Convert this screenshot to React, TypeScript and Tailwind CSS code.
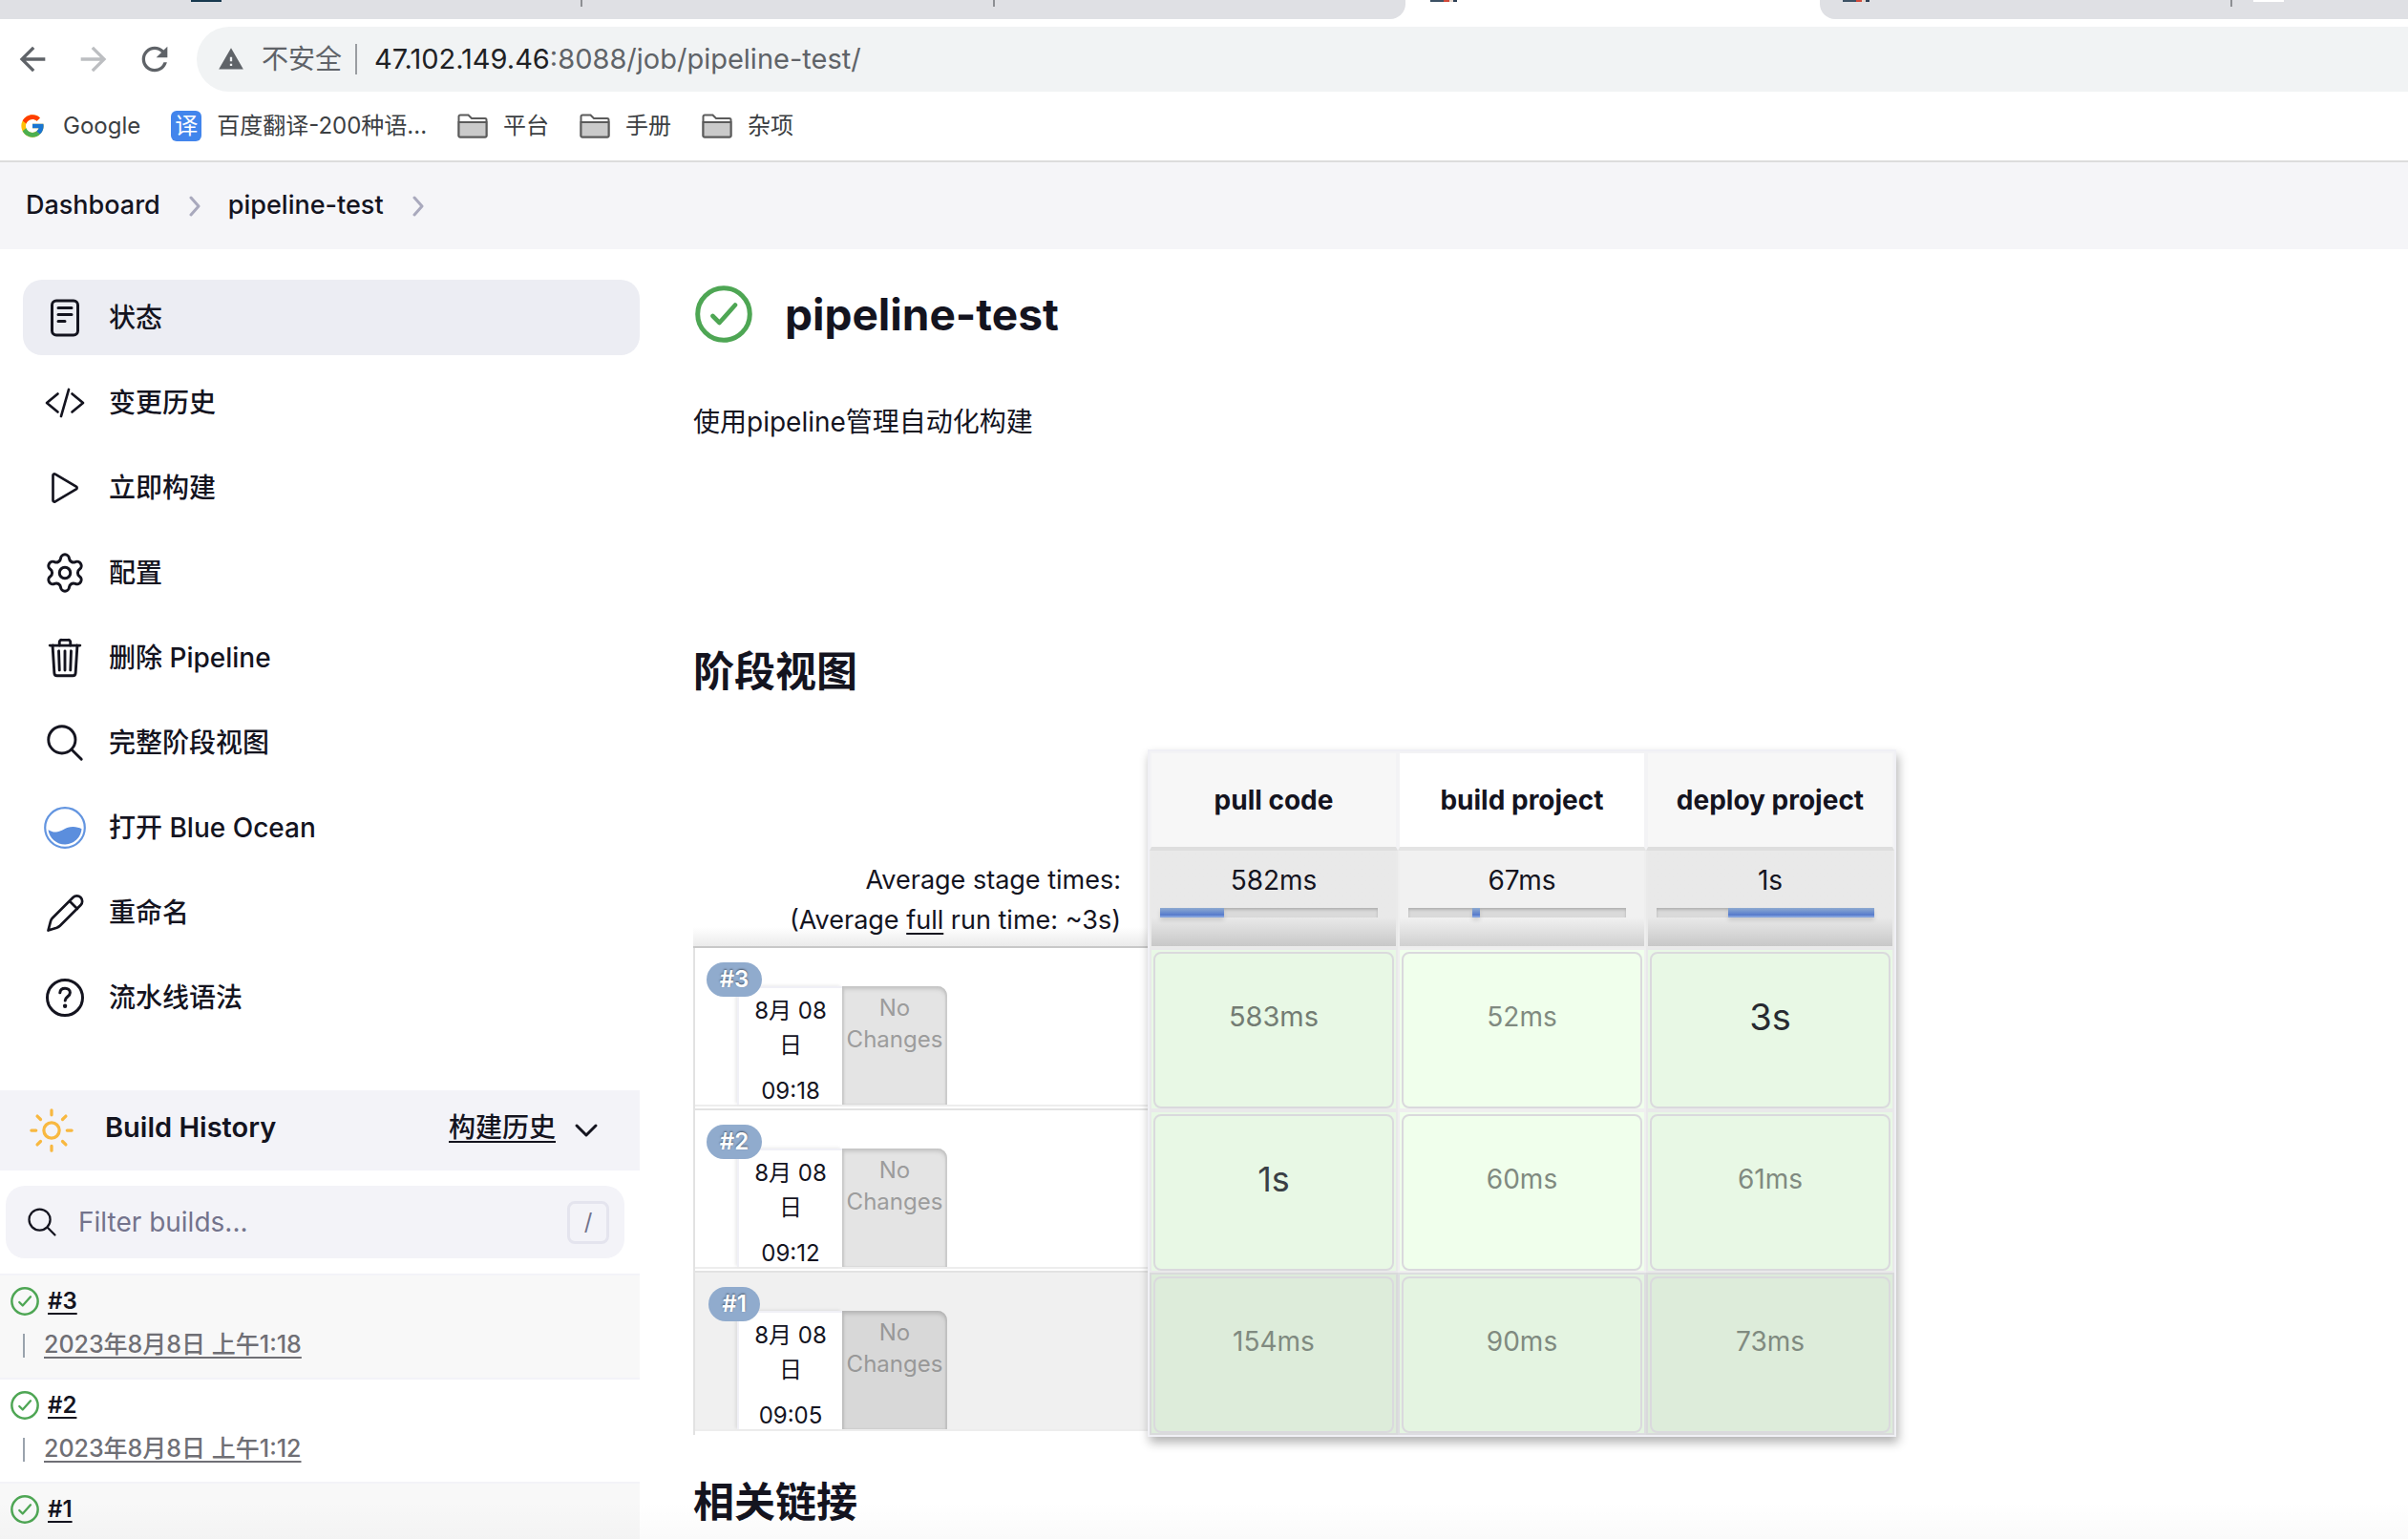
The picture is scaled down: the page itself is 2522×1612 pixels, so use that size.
import React from "react";
import { ChevronDown, Settings } from "lucide-react";
import { IoSearchOutline, IoSunnyOutline, IoTrashOutline } from "react-icons/io5";
import { MdArrowBack, MdArrowForward, MdRefresh, MdWarning } from "react-icons/md";
import { FcGoogle } from "react-icons/fc";

type IconProps = { children: React.ReactNode };

function LineIcon({ children }: IconProps) {
  return (
    <svg
      viewBox="0 0 48 48"
      className="size-12"
      fill="none"
      stroke="currentColor"
      strokeWidth="3"
      strokeLinecap="round"
      strokeLinejoin="round"
      aria-hidden="true"
    >
      {children}
    </svg>
  );
}

function StatusCheck({ className }: { className: string }) {
  return (
    <svg viewBox="0 0 60 60" className={className} fill="none" stroke="#4ea654" strokeWidth="5" strokeLinecap="round" strokeLinejoin="round" aria-hidden="true">
      <circle cx="30" cy="30" r="27.3" />
      <path d="M18.5 32l7 7L42 20.500" strokeWidth="4.600" />
    </svg>
  );
}

function FolderIcon() {
  return (
    <svg viewBox="0 0 32 26" className="h-[26px] w-8" aria-hidden="true">
      <path d="M1.500 3a1.500 1.500 0 0 1 1.500-1.500h8.500l3.500 3.500h14a1.500 1.500 0 0 1 1.500 1.500v16.500a1.500 1.500 0 0 1-1.500 1.500h-26a1.500 1.500 0 0 1-1.500-1.500z" fill="#fff" stroke="#5b5b5b" strokeWidth="2" />
      <path d="M1.500 9h29v14a1.500 1.500 0 0 1-1.500 1.500h-26a1.500 1.500 0 0 1-1.500-1.500z" fill="#cacaca" stroke="#5b5b5b" strokeWidth="2" />
    </svg>
  );
}

function TabFavicon() {
  return (
    <span className="flex h-0.5 w-7">
      <span className="w-3.5 bg-[#3d5265]" />
      <span className="w-1.5 bg-[#d2493a]" />
      <span className="w-1 bg-[#e8d9d0]" />
      <span className="w-1 bg-[#2d3f55]" />
    </span>
  );
}

function BrowserChrome() {
  return (
    <header className="shrink-0 border-b-2 border-[#dcdcdc] bg-white">
      <div className="flex h-5 items-start">
        <div className="flex h-5 w-[1472px] items-start rounded-br-2xl bg-[#dfe0e4]">
          <span className="ml-[200px] h-0.5 w-8 bg-[#17394f]" />
          <span className="ml-[376px] h-[7px] w-0.5 bg-[#8d8f93]" />
          <span className="ml-[430px] h-[7px] w-0.5 bg-[#8d8f93]" />
        </div>
        <div className="w-[434px] pl-[26px]">
          <TabFavicon />
        </div>
        <div className="flex h-5 flex-1 items-start rounded-bl-2xl bg-[#dfe0e4] pl-6">
          <TabFavicon />
          <span className="ml-[378px] h-[7px] w-0.5 bg-[#8d8f93]" />
          <span className="ml-[22px] h-0.5 w-8 bg-white" />
        </div>
      </div>
      <div className="flex items-center pt-2 pl-3.5 text-[#5f6368]">
        <button type="button" aria-label="Back">
          <MdArrowBack size={40} />
        </button>
        <button type="button" aria-label="Forward" className="ml-6 text-[#bcbec1]">
          <MdArrowForward size={40} />
        </button>
        <button type="button" aria-label="Reload" className="ml-6">
          <MdRefresh size={40} />
        </button>
        <div className="ml-6 flex h-[68px] flex-1 items-center rounded-l-full bg-[#f1f3f4] pl-[22px] text-[28px]">
          <MdWarning size={28} />
          <span className="ml-[18px]">不安全</span>
          <span className="ml-3.5 h-8 w-0.5 bg-[#9a9da1]" />
          <div role="textbox" aria-label="Address" className="ml-[18px] text-[29px]">
            <span className="text-[#202124]">47.102.149.46</span>:8088/job/pipeline-test/
          </div>
        </div>
      </div>
      <nav aria-label="Bookmarks" className="flex h-[72px] items-center gap-8 pl-5 text-[24px] text-[#3c4043]">
        <a href="#google" className="flex items-center gap-[18px]">
          <FcGoogle size={28} />
          Google
        </a>
        <a href="#fanyi" className="flex items-center gap-4">
          <span className="flex size-8 items-center justify-center rounded-md bg-[#4285ec] text-[24px] text-white">译</span>
          百度翻译-200种语...
        </a>
        {["平台", "手册", "杂项"].map((name) => (
          <button type="button" key={name} className="flex items-center gap-4">
            <FolderIcon />
            {name}
          </button>
        ))}
      </nav>
    </header>
  );
}

function Crumb({ label }: { label: string }) {
  return (
    <li className="flex items-center gap-[30px]">
      <a href="#crumb">{label}</a>
      <svg viewBox="0 0 12 22" className="h-[22px] w-3" fill="none" stroke="#a9a9bd" strokeWidth="3" strokeLinecap="round" strokeLinejoin="round" aria-hidden="true">
        <path d="M2 2l8 9-8 9" />
      </svg>
    </li>
  );
}

const tasks: { label: string; icon: React.ReactNode }[] = [
  {
    label: "状态",
    icon: (
      <LineIcon>
        <rect x="10.5" y="6" width="27" height="36" rx="4.5" />
        <path d="M17 13.500h14M17 20.500h14M17 27.500h7" />
      </LineIcon>
    ),
  },
  {
    label: "变更历史",
    icon: (
      <LineIcon>
        <path d="M16.500 14.500L5 24l11.500 9.500M31.500 14.500L43 24l-11.500 9.500M28 10l-8 28" strokeWidth="2.700" />
      </LineIcon>
    ),
  },
  {
    label: "立即构建",
    icon: (
      <LineIcon>
        <path d="M11.500 11v26c0 1.300 1.200 2.100 2.300 1.400l22-13c1.100-.7 1.100-2.100 0-2.800l-22-13c-1.100-.7-2.300.1-2.300 1.400z" strokeWidth="2.700" />
      </LineIcon>
    ),
  },
  { label: "配置", icon: <Settings size={46} strokeWidth={3} absoluteStrokeWidth /> },
  { label: "删除 Pipeline", icon: <IoTrashOutline size={46} /> },
  { label: "完整阶段视图", icon: <IoSearchOutline size={46} /> },
  {
    label: "打开 Blue Ocean",
    icon: (
      <LineIcon>
        <circle cx="24" cy="24" r="20.8" stroke="#6395e0" strokeWidth="2.200" />
        <path d="M6.500 26.200c2.500 1.200 5 2.600 8.500 2.300 7-.7 9-5.500 17.500-5.500 3.500 0 6.500 1 9 2.200A17.600 17.600 0 0 1 6.500 26.200z" fill="#5b8edd" stroke="none" />
      </LineIcon>
    ),
  },
  {
    label: "重命名",
    icon: (
      <LineIcon>
        <path d="M6.500 42.500L9 33q.5-2 2-3.500L32.500 8a5.600 5.600 0 0 1 8 8L19 37.500q-1.500 1.500-3.500 2.200zM29 12l8 8" strokeWidth="2.700" />
      </LineIcon>
    ),
  },
  {
    label: "流水线语法",
    icon: (
      <LineIcon>
        <circle cx="24" cy="24" r="18.500" />
        <path d="M18.800 18.800c.3-3 2.500-4.600 5.300-4.600 3 0 5.300 1.900 5.300 4.600 0 4.200-5.200 4.200-5.200 8.200" />
        <circle cx="24.100" cy="32.800" r="2.200" fill="currentColor" stroke="none" />
      </LineIcon>
    ),
  },
];

const builds: { id: string; time?: string }[] = [
  { id: "#3", time: "2023年8月8日 上午1:18" },
  { id: "#2", time: "2023年8月8日 上午1:12" },
  { id: "#1" },
];

function Sidebar() {
  return (
    <aside className="w-[670px] shrink-0 pt-8">
      <nav aria-label="Tasks" className="flex flex-col gap-2.5 pl-6">
        {tasks.map((task, i) => (
          <a
            key={task.label}
            href="#task"
            className={
              i === 0
                ? "flex h-[79px] items-center gap-[22px] rounded-[20px] bg-[#ecedf3] pl-5 text-[28px] font-medium"
                : "flex h-[79px] items-center gap-[22px] rounded-[20px] pl-5 text-[28px] font-medium"
            }
          >
            <span className="flex size-12 items-center justify-center">{task.icon}</span>
            {task.label}
          </a>
        ))}
      </nav>

      <section className="mt-[58px]">
        <div className="flex h-[84px] items-center bg-[#f3f3f8] pr-9 pl-7 text-[28px]">
          <IoSunnyOutline size={52} color="#f8b840" />
          <h2 className="ml-[30px] flex-1 pb-1.5 text-[29px] font-semibold">Build History</h2>
          <a href="#trend" className="pb-1.5 font-medium underline decoration-2 underline-offset-4">
            构建历史
          </a>
          <button type="button" aria-label="Collapse" className="ml-3">
            <ChevronDown size={40} strokeWidth={3} absoluteStrokeWidth />
          </button>
        </div>
        <label className="mt-4 mr-4 ml-1.5 flex h-[76px] items-center rounded-[20px] bg-[#f3f3f8] pr-4 pl-5">
          <IoSearchOutline size={36} />
          <input
            type="text"
            aria-label="Filter builds"
            placeholder="Filter builds..."
            className="ml-5 min-w-0 flex-1 bg-transparent text-[28px] outline-none placeholder:text-[#73738c]"
          />
          <kbd className="flex h-[45px] w-11 items-center justify-center rounded-lg border-3 border-[#e4e4ee] font-[Inter] text-[24px] text-[#73738c]">/</kbd>
        </label>
        <ul className="mt-4">
          {builds.map((b) => (
            <li key={b.id} className="h-[109px] border-t-2 border-[#f3f3f8] pt-2.5 odd:bg-[#f8f8f8]">
              <div className="flex h-[34px] items-center gap-[9px] pl-[11px]">
                <StatusCheck className="size-[30px]" />
                <a href="#build" className="text-[24px] font-semibold underline decoration-2 underline-offset-4">
                  {b.id}
                </a>
              </div>
              {b.time && (
                <div className="mt-3 flex h-[34px] items-center gap-5 pl-6">
                  <span className="h-[25px] w-0.5 bg-[#9aa3ad]" />
                  <a href="#build" className="text-[25px] font-medium text-[#6f6f75] underline decoration-2 underline-offset-4">
                    {b.time}
                  </a>
                </div>
              )}
            </li>
          ))}
        </ul>
      </section>
    </aside>
  );
}

const stages = [
  { name: "pull code", average: "582ms", start: 0, share: 29.5 },
  { name: "build project", average: "67ms", start: 29.5, share: 3.5 },
  { name: "deploy project", average: "1s", start: 33, share: 67 },
];

const small = "text-[28px] text-[#808a80]";
const runs = [
  {
    id: "#3",
    time: "09:18",
    first: false,
    cells: [
      { t: "583ms", c: "text-[29px] text-[#737c73]" },
      { t: "52ms", c: small },
      { t: "3s", c: "text-[38px] text-[#272a30]" },
    ],
  },
  {
    id: "#2",
    time: "09:12",
    first: false,
    cells: [
      { t: "1s", c: "text-[36px] text-[#3a3f45]" },
      { t: "60ms", c: small },
      { t: "61ms", c: small },
    ],
  },
  {
    id: "#1",
    time: "09:05",
    first: true,
    cells: [
      { t: "154ms", c: small },
      { t: "90ms", c: small },
      { t: "73ms", c: small },
    ],
  },
];

function cellTone(first: boolean, column: number) {
  if (first) return column === 1 ? "border-[#dddde0] bg-[#e4f4e1]" : "border-[#d9dadb] bg-[#ddecda]";
  return column === 1 ? "border-[#efefef] bg-[#f0ffec]" : "border-[#e9e9ea] bg-[#e8f8e5]";
}

function StageView() {
  return (
    <div className="relative mt-[54px] w-fit">
      <table className="table-fixed border-separate border-spacing-0">
        <colgroup>
          <col className="w-[478px]" />
          <col className="w-[260px]" />
          <col className="w-[260px]" />
          <col className="w-[260px]" />
        </colgroup>
        <thead>
          <tr>
            <td className="h-[104px] p-0" />
            {stages.map((s, i) => (
              <th
                key={s.name}
                scope="col"
                className={
                  i === 1
                    ? "h-[104px] border-2 border-b-4 border-[#f3f3f5] border-b-[#e4e4e4] bg-white p-0 text-[28px] font-bold"
                    : "h-[104px] border-2 border-b-4 border-[#f3f3f5] border-b-[#dedede] bg-[#f7f7f7] p-0 text-[28px] font-bold"
                }
              >
                {s.name}
              </th>
            ))}
          </tr>
          <tr>
            <td className="h-[102px] border-b-2 border-[#c8c8c8] bg-linear-to-t from-[#ebebeb] to-white to-20% p-0 pt-2.5 pr-[30px] text-right align-top text-[27px] leading-[42px]">
              Average stage times:
              <br />
              (Average <span className="underline decoration-2 underline-offset-4">full</span> run time: ~3s)
            </td>
            {stages.map((s, i) => (
              <td
                key={s.name}
                className={
                  i === 1
                    ? "h-[102px] border-x-2 border-b-2 border-[#eeeeee] bg-linear-to-t from-[#d0d0d0] to-[#f1f1f1] to-30% p-0 text-center align-top text-[28px]"
                    : "h-[102px] border-x-2 border-b-2 border-[#eaeaea] bg-linear-to-t from-[#c8c8c8] to-[#e9e9e9] to-30% p-0 text-center align-top text-[28px]"
                }
              >
                <div className="pt-2.5 leading-[42px]">{s.average}</div>
                <div className="mt-2 mr-[19px] ml-[9px] flex h-2.5 bg-[#dadada] shadow-[inset_0_2px_3px_#b0b0b0]">
                  <span
                    className="h-2.5 border-b-2 border-[#7f9fdc] bg-linear-to-b from-[#8eaad0] to-[#5377cc] shadow-[0_3px_4px_rgba(0,0,0,0.12)]"
                    style={{ marginLeft: `${s.start}%`, width: `${s.share}%` }}
                  />
                </div>
              </td>
            ))}
          </tr>
        </thead>
        <tbody>
          {runs.map((run) => (
            <tr key={run.id}>
              <td
                className={
                  run.first
                    ? "h-[170px] border-l-2 border-[#e2e2e2] p-0 align-top"
                    : "h-[170px] border-b-2 border-l-2 border-[#e2e2e2] p-0 align-top"
                }
              >
                <div className={run.first ? "relative h-[166px] border-b-2 border-[#ededed] bg-[#f0f0f0] pt-10" : "relative h-[166px] border-b-2 border-[#ededed] pt-10"}>
                  <div className="ml-11 flex h-[124px] text-center text-[24px]">
                    <div className="w-[110px] border-t-2 border-l-2 border-[#f0f0f6] bg-white px-2 pt-1.5 leading-9 shadow-[-2px_-1px_3px_rgba(0,0,0,0.08)]">
                      8月 08
                      <br />日<div className="mt-3">{run.time}</div>
                    </div>
                    <div
                      className={
                        run.first
                          ? "w-[110px] rounded-tr-[10px] bg-[#d8d8d8] pt-1.5 leading-[33px] text-[#989898] shadow-[inset_0_3px_4px_#b4b4b4,inset_2px_0_2px_#c4c4c4,inset_-2px_0_1px_#c8c8c8]"
                          : "w-[110px] rounded-tr-[10px] bg-[#e4e4e4] pt-1.5 leading-[33px] text-[#9c9c9c] shadow-[inset_0_3px_4px_#c2c2c2,inset_2px_0_2px_#cccccc,inset_-2px_0_1px_#d0d0d0]"
                      }
                    >
                      No
                      <br />
                      Changes
                    </div>
                  </div>
                  <div className="absolute top-[15px] left-[11px] flex w-[60px] justify-center">
                    <span className="h-9 rounded-[18px] bg-[#90abcd] px-3.5 text-[24px] leading-9 font-semibold text-white [text-shadow:0_-1px_2px_rgba(0,0,0,0.5)]">{run.id}</span>
                  </div>
                </div>
              </td>
              {run.cells.map((cell, i) => (
                <td key={i} className={`h-[170px] border-2 px-0.5 pt-0.5 pb-0 align-top ${cellTone(run.first, i)}`}>
                  <div className={`flex h-[164px] items-center justify-center rounded-lg border-2 border-[#dad9dd] pb-7 ${cell.c}`}>{cell.t}</div>
                </td>
              ))}
            </tr>
          ))}
        </tbody>
      </table>
      <div className="pointer-events-none absolute -top-0.5 -right-0.5 -bottom-0.5 left-[476px] border-2 border-[#f0f0f5] shadow-[2px_6px_10px_rgba(0,0,0,0.3)]" />
    </div>
  );
}

export default function App() {
  return (
    <div className="relative flex h-screen flex-col overflow-hidden bg-white font-[Inter,'Noto_Sans_CJK_SC',sans-serif] text-[#14141f]">
      <BrowserChrome />
      <nav aria-label="Breadcrumb" className="flex h-[91px] shrink-0 items-center bg-[#f5f5f8] pl-[27px] text-[27px] font-medium">
        <ol className="flex items-center gap-[29px]">
          <Crumb label="Dashboard" />
          <Crumb label="pipeline-test" />
        </ol>
      </nav>
      <div className="flex min-h-0 flex-1">
        <Sidebar />
        <main className="min-w-0 flex-1 pt-8 pl-14">
          <div className="flex h-[72px] items-center gap-[34px] pl-0.5">
            <StatusCheck className="size-[60px]" />
            <h1 className="text-[46px] font-bold">pipeline-test</h1>
          </div>
          <p className="mt-14 text-[28px] leading-[42px]">使用pipeline管理自动化构建</p>
          <h2 className="mt-[210px] text-[43px] leading-[60px] font-bold">阶段视图</h2>
          <StageView />
          <h2 className="mt-10 text-[43px] leading-[60px] font-bold">相关链接</h2>
        </main>
      </div>
      <div className="pointer-events-none absolute inset-x-0 bottom-0 h-10 bg-linear-to-t from-black/2 to-transparent" />
    </div>
  );
}
